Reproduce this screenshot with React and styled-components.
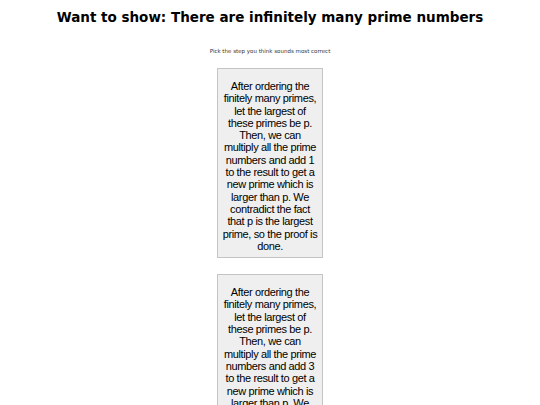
import styled, { createGlobalStyle } from "styled-components";

const GlobalStyle = createGlobalStyle`
  body {
    margin: 0;
    background: #ffffff;
    font-family: "DejaVu Sans", sans-serif;
  }
`;

const steps = [
  "After ordering the finitely many primes, let the largest of these primes be p. Then, we can multiply all the prime numbers and add 1 to the result to get a new prime which is larger than p. We contradict the fact that p is the largest prime, so the proof is done.",
  "After ordering the finitely many primes, let the largest of these primes be p. Then, we can multiply all the prime numbers and add 3 to the result to get a new prime which is larger than p. We contradict the fact that p is the largest prime, so the proof is done.",
];

const App = () => {
  return (
    <Page>
      <GlobalStyle />
      <Title>Want to show: There are infinitely many prime numbers</Title>
      <Hint>Pick the step you think sounds most correct</Hint>
      <Choices>
        {steps.map((step, i) => (
          <StepButton key={i} type="button">
            {step}
          </StepButton>
        ))}
      </Choices>
    </Page>
  );
};

const Page = styled.div`
  display: flex;
  flex-direction: column;
  align-items: center;
  padding-top: 8px;
`;

const Title = styled.h1`
  margin: 0;
  font-family: "DejaVu Sans", sans-serif;
  font-weight: bold;
  font-size: 13.5px;
  line-height: 18px;
  color: #000;
`;

const Hint = styled.p`
  margin: 21px 0 0 0;
  font-size: 5.5px;
  line-height: 8px;
  color: #333;
`;

const Choices = styled.div`
  display: flex;
  flex-direction: column;
  align-items: center;
  gap: 16px;
  margin-top: 13px;
`;

const StepButton = styled.button`
  box-sizing: border-box;
  width: 106px;
  padding: 11px 4px 5px;
  background: #efefef;
  border: 1px solid #c4c4c4;
  border-radius: 0;
  font-family: "Liberation Sans", Arial, sans-serif;
  font-size: 11px;
  letter-spacing: -0.37px;
  line-height: 12.3px;
  color: #000;
  text-align: center;
  cursor: pointer;
`;

export default App;
